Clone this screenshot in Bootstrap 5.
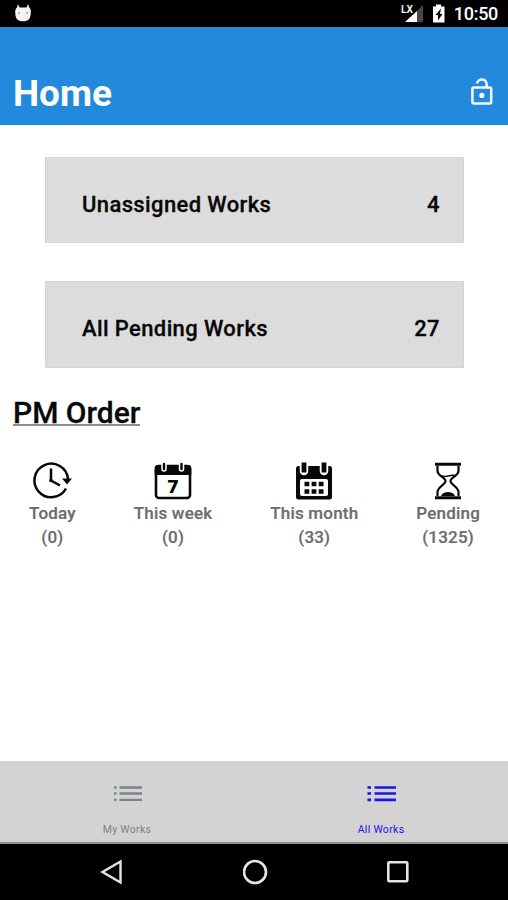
<!DOCTYPE html>
<html lang="en">
<head>
<meta charset="utf-8">
<meta name="viewport" content="width=device-width, initial-scale=1">
<title>Home</title>
<link href="https://cdn.jsdelivr.net/npm/bootstrap@5.3.0/dist/css/bootstrap.min.css" rel="stylesheet">
<style>
body{font-family:Roboto,"Liberation Sans",sans-serif;color:#080808;height:900px;overflow:hidden}
svg{display:block;flex:none}
.status-strip{height:27px;padding:0 10px 0 13px;font-size:18px;font-weight:500}
.clock-text{line-height:27px;margin-left:8px;letter-spacing:-.3px}
.title-bar{height:98px;background:#2289dc;padding:46px 14px 0 13px}
.title-bar h1{font-size:37px;line-height:42px;font-weight:700}
.tiles{padding:32px 44px 0 45px}
.tile{background:#dcdcdc;box-shadow:inset 0 0 0 1px #d5d5d5;padding:8px 24px 0 37px;font-size:22px;font-weight:500;letter-spacing:.38px;-webkit-text-stroke:.3px #080808}
.tile-a{height:86px;margin-bottom:38px}
.tile-b{height:87px}
.section-title{font-size:30px;line-height:31px;height:33px;font-weight:500;margin:29px 0 0 13px;-webkit-text-stroke:.3px #080808}
.section-title span{display:inline-block;height:29px;border-bottom:2px solid #8d8d8d}
.orders{padding:32px 28px 0 29px}
.order{font-size:17px;line-height:24px;font-weight:500;color:#6c6c6c;letter-spacing:.2px;-webkit-text-stroke:.2px #6c6c6c}
.order svg{margin-bottom:1px;color:#080808;-webkit-text-stroke:0}
.tab-strip{height:83px;background:#d3d3d3;border-bottom:2px solid #8c8c8c;font-size:10.5px;letter-spacing:.3px}
.tab{color:#7b8488;padding-top:24px;line-height:14px}
.tab svg{margin-bottom:21px}
.tab.current{color:#1a14e6}
.nav-keys{height:56px;padding:0 98px 0 99px}
</style>
</head>
<body class="d-flex flex-column bg-white">
<div class="status-strip bg-black text-white d-flex align-items-center flex-shrink-0">
  <svg width="20" height="22" viewBox="0 0 20 22"><path d="M5 1l1.500 3.500h7L15 1l1.300 3.500c1.500 1 1.700 3 1.400 6 0 5-2.500 7.800-7.700 7.800s-7.700-2.800-7.700-7.800C2 7.500 2.500 5.500 4 4.500z" fill="#f4f4f4"/><path d="M5 10h2M13 10h2" stroke="#999" stroke-width="1.500"/></svg>
  <svg class="ms-auto" width="24" height="22" viewBox="0 0 24 22"><path d="M23 2v17h-6V8z" fill="#484848"/><path d="M17 8v11H5z" fill="#fff"/><text x="1" y="10" font-size="10.500" font-weight="700" textLength="12" lengthAdjust="spacingAndGlyphs" fill="#eee">LX</text></svg>
  <svg width="14" height="22" viewBox="0 0 14 22" style="margin-left:8px"><path d="M4 1.500h5v2h3.500v16H1v-16h3z" fill="#fff"/><path d="M9 5.500L3.500 12H6v5.500L10.500 11H8z" fill="#000"/></svg>
  <span class="clock-text">10:50</span>
</div>
<header class="title-bar text-white d-flex justify-content-between flex-shrink-0">
  <h1 class="m-0">Home</h1>
  <svg width="24" height="30" viewBox="0 0 24 30" style="margin-top:4px" fill="none" stroke="#f4faff" stroke-width="2.500"><rect x="2.400" y="10.600" width="18.800" height="15.800" rx="1.500"/><path d="M7 6.500a4.900 4.900 0 0 1 9.700 1V10"/><circle cx="11.900" cy="18.400" r="2.600" fill="#f4faff" stroke="none"/></svg>
</header>
<main class="flex-grow-1">
  <div class="tiles">
    <div class="tile tile-a d-flex justify-content-between align-items-center"><span>Unassigned Works</span><span>4</span></div>
    <div class="tile tile-b d-flex justify-content-between align-items-center"><span>All Pending Works</span><span>27</span></div>
  </div>
  <h2 class="section-title"><span>PM Order</span></h2>
  <div class="orders d-flex justify-content-between text-center">
    <div class="order d-flex flex-column align-items-center">
      <svg width="40" height="38" viewBox="0 0 40 38" fill="none" stroke="currentColor"><path d="M36 17A16.800 16.800 0 1 0 34 26.500" stroke-width="2.500"/><path d="M30 16.500h10l-5 6z" fill="currentColor" stroke="none"/><path d="M19 6.500v12l9 5" stroke-width="2.500"/><circle cx="19" cy="18.500" r="1.800" fill="currentColor" stroke="none"/></svg>
      <span>Today</span><span>(0)</span>
    </div>
    <div class="order d-flex flex-column align-items-center">
      <svg width="38" height="38" viewBox="0 0 38 38"><rect x="2" y="4" width="34" height="32" rx="3" fill="#fff" stroke="currentColor" stroke-width="2.600"/><path d="M.7 13V6q0-3 3-3h30.600q3 0 3 3v7z" fill="currentColor"/><g stroke-linecap="round"><path d="M10 3v4M27.500 3v4" stroke="#fff" stroke-width="5.500"/><path d="M10 2v5M27.500 2v5" stroke="currentColor" stroke-width="2.400"/></g><text x="19" y="31" text-anchor="middle" font-family="DejaVu Sans" font-size="18" font-weight="700" fill="currentColor">7</text></svg>
      <span>This week</span><span>(0)</span>
    </div>
    <div class="order d-flex flex-column align-items-center">
      <svg width="38" height="38" viewBox="0 0 38 38"><rect x="1" y="4" width="36" height="33.500" rx="2.500" fill="currentColor"/><g stroke-linecap="round"><path d="M9 2v7M29 2v7" stroke="#fff" stroke-width="8.500"/></g><path d="M9 .5v10M29 .5v10" stroke="currentColor" stroke-width="4.800"/><rect x="5" y="17" width="28" height="17" rx="2" fill="#fff"/><path d="M9.500 22h19M9.500 29.500h19" stroke="currentColor" stroke-width="4.400" stroke-dasharray="4.800 2.300"/></svg>
      <span>This month</span><span>(33)</span>
    </div>
    <div class="order d-flex flex-column align-items-center">
      <svg width="28" height="38" viewBox="0 0 28 38" fill="none" stroke="currentColor"><path d="M1 2.300h26M1 35.700h26" stroke-width="3"/><path d="M3.500 4v5c0 5 8 6.500 8 10s-8 6-8 11v4M24.500 4v5c0 5-8 6.500-8 10s8 6 8 11v4" stroke-width="2.200"/><path d="M6 13.500q4 1.500 8 .5t8-.5" stroke-width="1.500"/><path d="M7 34c1-3 4-4 7-4s6 1 7 4z" fill="currentColor" stroke="none"/></svg>
      <span>Pending</span><span>(1325)</span>
    </div>
  </div>
</main>
<nav class="tab-strip d-flex flex-shrink-0">
  <div class="tab w-50 d-flex flex-column align-items-center">
    <svg width="29" height="17" viewBox="0 0 29 17" stroke="currentColor" stroke-width="2.300"><path d="M1 2.500h2.500M6.500 2.500h22.500M1 8.500h2.500M6.500 8.500h22.500M1 14.800h2.500M6.500 14.800h22.500"/></svg>
    <span>My Works</span>
  </div>
  <div class="tab current w-50 d-flex flex-column align-items-center">
    <svg width="29" height="17" viewBox="0 0 29 17" stroke="currentColor" stroke-width="2.700"><path d="M.5 2.500h3.500M7.500 2.500h21.500M.5 8.500h3.500M7.500 8.500h21.500M.5 14.800h3.500M7.500 14.800h21.500"/></svg>
    <span>All Works</span>
  </div>
</nav>
<div class="nav-keys bg-black d-flex align-items-center justify-content-between flex-shrink-0">
  <svg width="26" height="26" viewBox="0 0 26 26" fill="none" stroke="#e4e4e4" stroke-width="2.400"><path d="M21.500 2.500v21L3.500 13z"/></svg>
  <svg width="26" height="26" viewBox="0 0 26 26" fill="none" stroke="#e4e4e4" stroke-width="2.600"><circle cx="12" cy="13" r="11"/></svg>
  <svg width="24" height="24" viewBox="0 0 24 24" fill="none" stroke="#e4e4e4" stroke-width="2.600"><rect x="2.300" y="2.300" width="19" height="19" rx="1"/></svg>
</div>
<script src="https://cdn.jsdelivr.net/npm/bootstrap@5.3.0/dist/js/bootstrap.bundle.min.js"></script>
</body>
</html>
